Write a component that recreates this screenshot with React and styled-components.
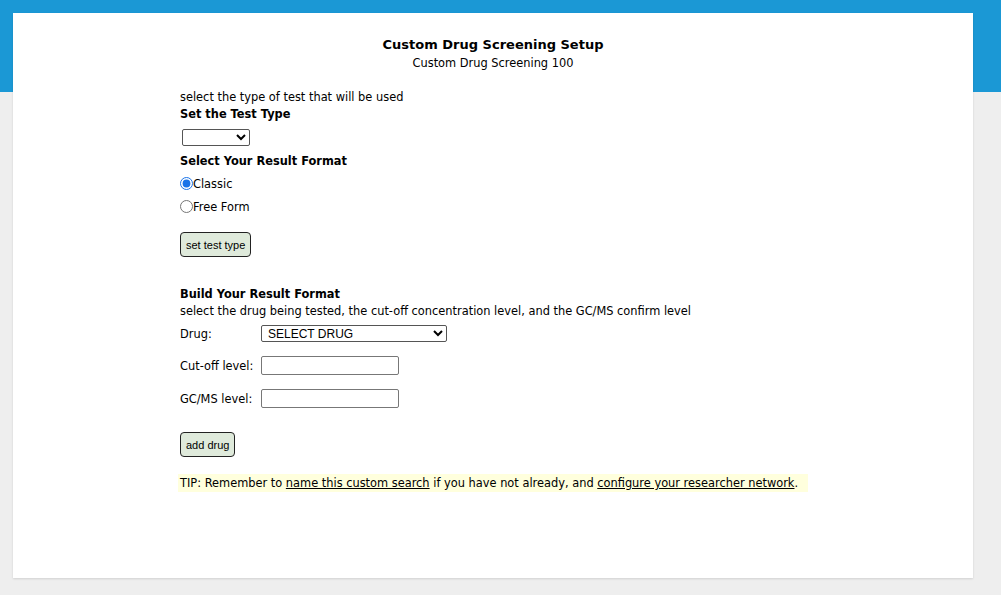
import React from "react";
import styled, { createGlobalStyle } from "styled-components";

const GlobalStyle = createGlobalStyle`
  html, body {
    margin: 0;
    padding: 0;
  }
  body {
    height: 595px;
    overflow: hidden;
    background: linear-gradient(#1b98d5 0, #1b98d5 92px, #eeeeee 92px);
    font-family: "DejaVu Sans", Verdana, sans-serif;
    font-size: 11.4px;
    color: #000;
  }
`;

const Page = styled.div`
  padding: 13px 28px 0 13px;
`;

const Card = styled.div`
  background: #fff;
  height: 565px;
  box-shadow: 0 1px 2px rgba(0, 0, 0, 0.12);
  box-sizing: border-box;
  padding-top: 24px;
  display: flex;
  flex-direction: column;
  align-items: center;
`;

const Title = styled.h1`
  margin: 0;
  font-size: 13px;
  line-height: 16px;
  font-weight: bold;
`;

const Subtitle = styled.div`
  margin-top: 3px;
  line-height: 14px;
`;

const Content = styled.div`
  width: 630px;
  margin-top: 19px;
  display: flex;
  flex-direction: column;
  align-items: flex-start;
  padding-left: 2px;
  box-sizing: border-box;
`;

const Text = styled.div`
  line-height: 17px;
  margin-top: ${p => p.$top || 0}px;
`;

const Heading = styled(Text)`
  font-weight: bold;
`;

const Select = styled.select`
  font-family: "Liberation Sans", Arial, sans-serif;
  font-size: 12px;
  height: 17px;
  width: ${p => p.$width}px;
  margin: ${p => p.$margin || 0};
  padding: 0 2px;
  border: 1px solid #555;
  border-radius: 2px;
  background: #fff;
  color: #000;
  box-sizing: border-box;
`;

const RadioRow = styled.label`
  display: flex;
  align-items: center;
  height: 17px;
  margin-top: ${p => p.$top}px;
`;

const Radio = styled.input`
  width: 13px;
  height: 13px;
  margin: 0;
  accent-color: #1a73e8;
`;

const Button = styled.button`
  font-family: "Liberation Sans", Arial, sans-serif;
  font-size: 11px;
  height: 25px;
  padding: 0 5px;
  margin-top: ${p => p.$top}px;
  background: #dfeadb;
  border: 1px solid #222;
  border-radius: 4px;
  color: #000;
`;

const FieldRow = styled.div`
  display: flex;
  align-items: center;
  margin-top: ${p => p.$top}px;
`;

const Label = styled.span`
  width: 81px;
`;

const Input = styled.input`
  width: 138px;
  height: 19px;
  box-sizing: border-box;
  border: 1px solid #777;
  border-radius: 2px;
  margin: 0;
`;

const Tip = styled.div`
  margin: 17px 0 0 -2px;
  width: 630px;
  box-sizing: border-box;
  padding: 0 2px;
  line-height: 18px;
  background: #ffffdd;
`;

const TipLink = styled.a`
  color: #000;
  text-decoration: underline;
`;

export default function App() {
  return (
    <>
      <GlobalStyle />
      <Page>
        <Card>
          <Title>Custom Drug Screening Setup</Title>
          <Subtitle>Custom Drug Screening 100</Subtitle>
          <Content>
            <Text $top={0}>select the type of test that will be used</Text>
            <Heading>Set the Test Type</Heading>
            <Select $width={68} $margin="6px 0 0 2px">
              <option></option>
            </Select>
            <Heading $top={7}>Select Your Result Format</Heading>
            <RadioRow $top={5}>
              <Radio type="radio" name="fmt" defaultChecked />
              Classic
            </RadioRow>
            <RadioRow $top={6}>
              <Radio type="radio" name="fmt" />
              Free Form
            </RadioRow>
            <Button $top={17}>set test type</Button>
            <Heading $top={29}>Build Your Result Format</Heading>
            <Text>select the drug being tested, the cut-off concentration level, and the GC/MS confirm level</Text>
            <FieldRow $top={5}>
              <Label>Drug:</Label>
              <Select $width={186}>
                <option>SELECT DRUG</option>
              </Select>
            </FieldRow>
            <FieldRow $top={14}>
              <Label>Cut-off level:</Label>
              <Input type="text" />
            </FieldRow>
            <FieldRow $top={14}>
              <Label>GC/MS level:</Label>
              <Input type="text" />
            </FieldRow>
            <Button $top={24}>add drug</Button>
            <Tip>
              TIP: Remember to <TipLink href="#">name this custom search</TipLink> if you have not already, and{" "}
              <TipLink href="#">configure your researcher network</TipLink>.
            </Tip>
          </Content>
        </Card>
      </Page>
    </>
  );
}
